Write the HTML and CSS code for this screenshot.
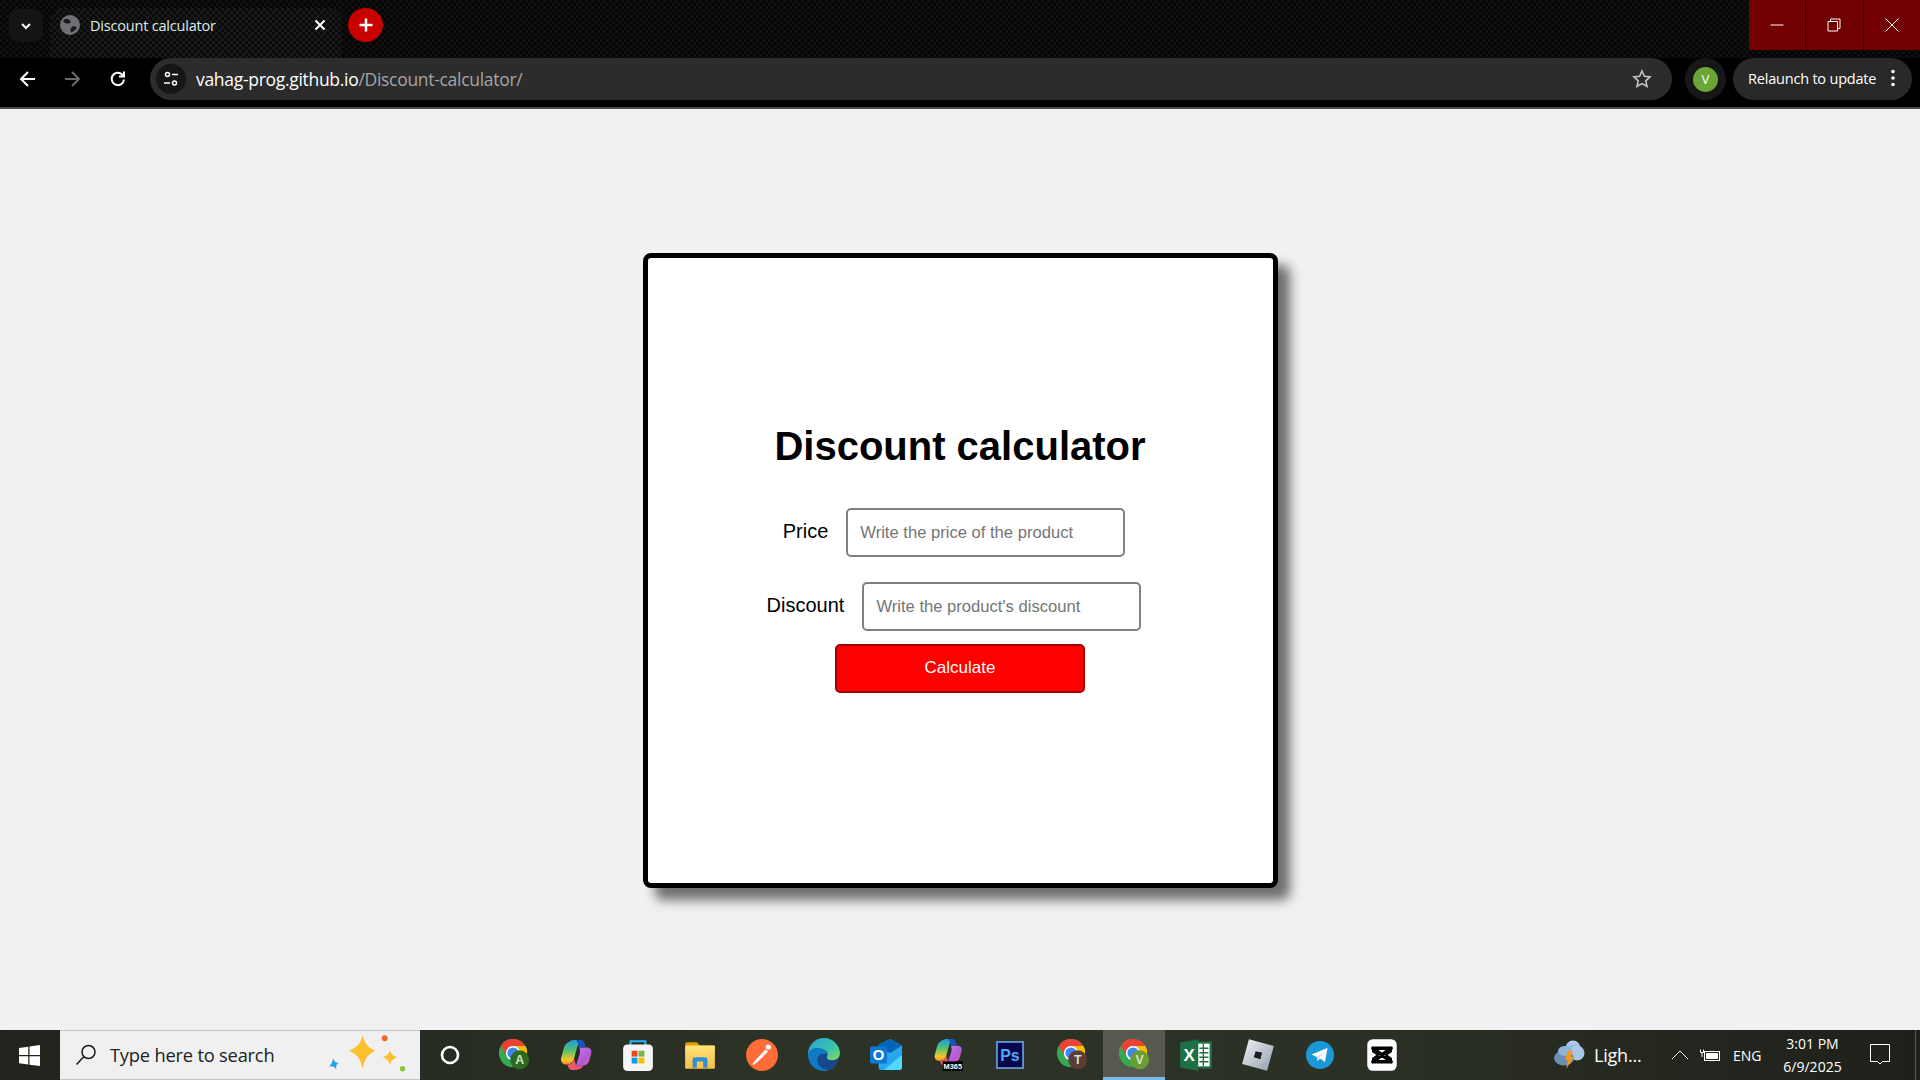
FILE: index.html
```html
<!DOCTYPE html>
<html lang="en">
<head>
<meta charset="utf-8">
<title>Discount calculator</title>
<link rel="stylesheet" href="styles.css">
</head>
<body>
<svg class="defs" width="0" height="0" aria-hidden="true">
  <defs>
    <symbol id="chrome" viewBox="0 0 30 30">
      <circle cx="15" cy="15" r="15" fill="#34a853"/>
      <path d="M2 7.5A15 15 0 0 1 28 7.5H15A7.5 7.5 0 0 0 8.5 18.75Z" fill="#ea4335"/>
      <path d="M28 7.5A15 15 0 0 1 15 30L21.5 18.75A7.5 7.5 0 0 0 15 7.5Z" fill="#fbbc04"/>
      <circle cx="15" cy="15" r="7.6" fill="#fff"/>
      <circle cx="15" cy="15" r="6" fill="#4285f4"/>
    </symbol>
    <linearGradient id="cpA" x1="0" y1="0" x2="0" y2="1">
      <stop offset="0" stop-color="#1e9be0"/><stop offset=".45" stop-color="#5cc46b"/><stop offset=".8" stop-color="#f5c52c"/><stop offset="1" stop-color="#f08a2c"/>
    </linearGradient>
    <linearGradient id="cpB" x1="0" y1="0" x2="1" y2="1">
      <stop offset="0" stop-color="#c77ae8"/><stop offset=".6" stop-color="#b05ad8"/><stop offset="1" stop-color="#f0608a"/>
    </linearGradient>
    <linearGradient id="cpC" x1="0" y1="0" x2="1" y2="1">
      <stop offset="0" stop-color="#ef6a5a"/><stop offset="1" stop-color="#ee4a7a"/>
    </linearGradient>
    <linearGradient id="edgeG" x1="0" y1="0" x2="1" y2="1">
      <stop offset="0" stop-color="#2aa5d8"/><stop offset=".55" stop-color="#36c0b0"/><stop offset="1" stop-color="#7ee05a"/>
    </linearGradient>
    <linearGradient id="robloxG" x1="0" y1="0" x2="1" y2="1">
      <stop offset="0" stop-color="#f4f4f4"/><stop offset="1" stop-color="#8f9cae"/>
    </linearGradient>
    <linearGradient id="cloudG" x1="0" y1="0" x2="0" y2="1">
      <stop offset="0" stop-color="#b9d2ee"/><stop offset="1" stop-color="#6f97c8"/>
    </linearGradient>
    <linearGradient id="folderG" x1="0" y1="0" x2="0" y2="1">
      <stop offset="0" stop-color="#ffe27a"/><stop offset="1" stop-color="#f5bf45"/>
    </linearGradient>
    <symbol id="copilot" viewBox="0 0 30 30">
      <path d="M8 3C9.5 1.500 12 1 15 1H20C18 3 17 5 16 8L13 19C12 22 9.500 24 6 24C2.500 24 0.500 21.500 1 18L3.500 9C4.300 6 5.500 4 8 3Z" fill="url(#cpA)"/>
      <path d="M18 8H25C28 8 30 10 29.300 13.500L27.500 20C26.700 23.500 24 25 21 25H15L18.500 14C19 12 19 9.500 18 8Z" fill="url(#cpB)"/>
      <path d="M15 1H20C22 1 23.500 4 24 8H18C17.500 5 16.500 2.500 15 1Z" fill="#1557c0"/>
      <path d="M7 24C10.500 24 12.500 22 13.500 19L15 25H22C20 28 17.500 29 14 29H11C9 29 7.500 27 7 24Z" fill="url(#cpC)"/>
    </symbol>
  </defs>
</svg>

<header class="chrome">
  <div class="tabstrip">
    <button class="tab-search" type="button" aria-label="Search tabs">
      <svg class="ic-12" viewBox="0 0 12 12"><path d="M2 4l4 4 4-4" class="st-white-2"/></svg>
    </button>
    <div class="tab">
      <svg class="favicon" viewBox="0 0 20 20">
        <circle cx="10" cy="10" r="10" fill="#6f7074"/>
        <path d="M3 5.500C6 3 9 4 10 5.500C11.500 7 9.500 9 7.500 8.500C5.500 8.500 3.500 7.500 3 5.500ZM17 13C15 15 13.500 16.500 11 17.500C10 15 10.500 12.500 12.500 11.500C14.500 11 16 11.500 17 13Z" fill="#1a1a1c"/>
      </svg>
      <span class="tab-title">Discount calculator</span>
      <svg class="tab-close" viewBox="0 0 12 12"><path d="M1.500 1.500l9 9m0-9l-9 9" class="st-white-2"/></svg>
    </div>
    <button class="new-tab" type="button" aria-label="New tab">
      <svg class="ic-16" viewBox="0 0 16 16"><path d="M8 1.500v13M1.500 8h13" class="st-white-25"/></svg>
    </button>
    <div class="win-controls">
      <div class="win-btn"><svg class="ic-14" viewBox="0 0 14 14"><path d="M0.500 7h13" class="st-thin"/></svg></div>
      <div class="win-btn"><svg class="ic-14" viewBox="0 0 14 14"><path d="M1 3.500h9.500v9.500H1zM3.500 3.500V1H13v9.500h-2.500" class="st-thin"/></svg></div>
      <div class="win-btn"><svg class="ic-14" viewBox="0 0 14 14"><path d="M0.500 0.500l13 13m0-13l-13 13" class="st-thin"/></svg></div>
    </div>
  </div>
  <div class="toolbar">
    <svg class="nav-icon nav-back" viewBox="0 0 20 20"><path d="M17 10H3.500M10 3l-7 7 7 7" class="st-white-2"/></svg>
    <svg class="nav-icon nav-fwd" viewBox="0 0 20 20"><path d="M3 10h13.500M10 3l7 7-7 7" class="st-grey-2"/></svg>
    <svg class="nav-icon nav-reload" viewBox="0 0 20 20"><path d="M16 10.500A6.200 6.200 0 1 1 14.200 5.500L16 7.500M16 2.500v5h-5" class="st-white-2"/></svg>
    <div class="omnibox">
      <span class="site-info">
        <svg class="ic-16" viewBox="0 0 16 16"><circle cx="4.500" cy="3.500" r="2" class="st-white-15"/><path d="M9 3.500h6M1 12h6" class="st-white-15"/><circle cx="11.500" cy="12" r="2" class="st-white-15"/></svg>
      </span>
      <span class="url"><span class="url-host">vahag-prog.github.io</span><span class="url-path">/Discount-calculator/</span></span>
      <svg class="star" viewBox="0 0 20 20"><path d="M10 2l2.400 5.300 5.600.6-4.200 3.900 1.200 5.700L10 14.600l-5 2.900 1.200-5.700L2 7.900l5.600-.6z" class="st-star"/></svg>
    </div>
    <div class="avatar-wrap"><span class="avatar">V</span></div>
    <div class="relaunch">
      <span class="relaunch-text">Relaunch to update</span>
      <svg class="dots" viewBox="0 0 4 18"><circle cx="2" cy="2.500" r="1.800" fill="#fff"/><circle cx="2" cy="9" r="1.800" fill="#fff"/><circle cx="2" cy="15.500" r="1.800" fill="#fff"/></svg>
    </div>
  </div>
</header>

<main class="page">
  <section class="card">
    <h1 class="card-title">Discount calculator</h1>
    <div class="field field-price">
      <label class="field-label" for="price">Price</label>
      <input class="field-input" id="price" type="text" placeholder="Write the price of the product">
    </div>
    <div class="field field-discount">
      <label class="field-label" for="discount">Discount</label>
      <input class="field-input" id="discount" type="text" placeholder="Write the product's discount">
    </div>
    <button class="calc-btn" type="button">Calculate</button>
  </section>
</main>

<footer class="taskbar">
  <div class="start">
    <svg class="win-logo" viewBox="0 0 20 20"><path d="M0 2.800L8.800 1.600V9.500H0zM10 1.400L20 0V9.500H10zM0 10.700H8.800V18.500L0 17.300zM10 10.700H20V20L10 18.700z" fill="#fff"/></svg>
  </div>
  <div class="search">
    <svg class="search-icon" viewBox="0 0 22 22"><circle cx="13.500" cy="8" r="6.500" class="st-dark"/><path d="M8.800 12.700L1.500 20.500" class="st-dark"/></svg>
    <span class="search-text">Type here to search</span>
    <svg class="sparkle" viewBox="0 0 80 40">
      <path d="M33 1C35 9 37 12 45 16C37 20 35 24 33 33C31 24 29 20 20 16C29 12 31 9 33 1Z" fill="#fbc02d"/>
      <path d="M59 15C60 19 62 21 66 22C62 24 60 25 59 30C58 25 56 24 52 22C56 21 58 19 59 15Z" fill="#fbc02d"/>
      <circle cx="54" cy="4" r="2.800" fill="#ef6a2a"/>
      <circle cx="71" cy="33" r="2.600" fill="#8fc640"/>
      <path d="M5 23C6 26 7 27 10 27.500C8 29 7.500 30 8 34C6 31 4.500 30.500 0.500 31C3 29.500 4 27 5 23Z" fill="#29a3e8"/>
    </svg>
  </div>
  <div class="apps">
    <div class="app"><svg class="ic-cortana" viewBox="0 0 20 20"><circle cx="10" cy="10" r="8" class="st-cortana"/></svg></div>
    <div class="app"><svg class="ic-app" viewBox="0 0 36 36"><use href="#chrome" x="2" y="1" width="30" height="30"/><circle cx="24" cy="23" r="10" fill="#2d6a1f"/><text x="24" y="28" class="badge-text">A</text></svg></div>
    <div class="app"><svg class="ic-copilot" viewBox="0 0 30 30"><use href="#copilot"/></svg></div>
    <div class="app">
      <svg class="ic-app" viewBox="0 0 32 32">
        <path d="M9 8V3h14v5" fill="none" stroke="#29b6f6" stroke-width="2"/>
        <rect x="2" y="6" width="28" height="25" rx="4" fill="#f5f5f5"/>
        <rect x="10" y="12" width="5.500" height="5.500" fill="#e8491d"/><rect x="16.500" y="12" width="5.500" height="5.500" fill="#7cb342"/>
        <rect x="10" y="18.500" width="5.500" height="5.500" fill="#0a9be3"/><rect x="16.500" y="18.500" width="5.500" height="5.500" fill="#fbb900"/>
      </svg>
    </div>
    <div class="app">
      <svg class="ic-app" viewBox="0 0 32 32">
        <path d="M2 6a2 2 0 0 1 2-2h9l3 3h14v6H2z" fill="#d9a106"/>
        <rect x="2" y="7" width="28" height="22" rx="1.500" fill="url(#folderG)"/>
        <path d="M9 28V20a2 2 0 0 1 2-2h10a2 2 0 0 1 2 2v8h-4v-6h-6v6z" fill="#2f8fd8"/>
      </svg>
    </div>
    <div class="app">
      <svg class="ic-app" viewBox="0 0 32 32">
        <circle cx="16" cy="16" r="15" fill="#ff6c37"/>
        <circle cx="22" cy="8.500" r="2.500" fill="#fff"/>
        <path d="M19.500 10.500L21.500 13L13 21.500L8 25.500L7 24.500L11 19.500Z" fill="#fff"/>
      </svg>
    </div>
    <div class="app">
      <svg class="ic-app" viewBox="0 0 32 32">
        <path d="M1 16A15 15 0 0 1 31 14C31 19 27 21 23 21C19 21 17.500 19 18.500 16C16 15.500 13 14 9 15C4 16.500 1 20 1 16Z" fill="url(#edgeG)"/>
        <path d="M1 16C1 11 6 9 11 9.500C16 10 19 12 20 15C15 13 10 16 10 21C10 26 15 30 21 30C19 30.700 17.500 31 16 31C7 31 1 24 1 16Z" fill="#0f79c8"/>
        <path d="M10 21C10 16 15 13 20 15C18 17 18 20 21 21C24 22 27 21 30 19C28 26 24 30 21 30C15 30 10 26 10 21Z" fill="#17488f"/>
      </svg>
    </div>
    <div class="app">
      <svg class="ic-app" viewBox="0 0 32 32">
        <path d="M9 6L20 1L31 7V28a2 2 0 0 1-2 2H11a2 2 0 0 1-2-2z" fill="#28a8ea"/>
        <path d="M9 6L20 1L31 7L20 14L9 8z" fill="#0364b8"/>
        <path d="M14 30L31 16V28a2 2 0 0 1-2 2z" fill="#50d9ff"/>
        <rect x="1" y="8" width="16" height="16" rx="1.500" fill="#0f78d4"/>
        <text x="9" y="21" class="outlook-text">O</text>
      </svg>
    </div>
    <div class="app">
      <svg class="ic-app ic-m365" viewBox="0 0 34 34">
        <use href="#copilot" x="2" y="1" width="30" height="27"/>
        <rect x="12" y="23" width="19" height="9" fill="#000"/>
        <text x="21.500" y="30.500" class="m365-text">M365</text>
      </svg>
    </div>
    <div class="app">
      <svg class="ic-ps" viewBox="0 0 30 30">
        <rect x="1" y="1" width="28" height="28" fill="#06064a" stroke="#5d95cf" stroke-width="2"/>
        <text x="15" y="21" class="ps-text">Ps</text>
      </svg>
    </div>
    <div class="app"><svg class="ic-app" viewBox="0 0 36 36"><use href="#chrome" x="2" y="1" width="30" height="30"/><circle cx="24" cy="23" r="10" fill="#5b3d36"/><text x="24" y="28" class="badge-text">T</text></svg></div>
    <div class="app app-active"><svg class="ic-app" viewBox="0 0 36 36"><use href="#chrome" x="2" y="1" width="30" height="30"/><circle cx="24" cy="23" r="10" fill="#6a9e32"/><text x="24" y="28" class="badge-text">V</text></svg></div>
    <div class="app">
      <svg class="ic-app" viewBox="0 0 30 30">
        <rect x="14" y="4" width="14" height="22" fill="#fff" stroke="#1d7044" stroke-width="2"/>
        <path d="M18 9h8M18 13h8M18 17h8M18 21h8M21.500 5v20" stroke="#1d7044" stroke-width="1.200"/>
        <path d="M1 4L17 1V29L1 26z" fill="#1d7044"/>
        <text x="9" y="20" class="excel-text">X</text>
      </svg>
    </div>
    <div class="app">
      <svg class="ic-app" viewBox="0 0 30 30">
        <path d="M7 1L29 7L23 29L1 23ZM13 12L11.500 17L17 18.500L18.500 13Z" fill="url(#robloxG)" fill-rule="evenodd"/>
        <path d="M13 12L18.500 13L17 18.500L11.500 17Z" fill="#1e1e1e"/>
      </svg>
    </div>
    <div class="app">
      <svg class="ic-telegram" viewBox="0 0 30 30">
        <circle cx="15" cy="15" r="14" fill="#1a98d8"/>
        <path d="M6.500 14.500L22.500 8L20 22L15 18.500L12.500 21L11.800 17Z" fill="#fff"/>
        <path d="M11.800 17L20 11.500L14 18L12.500 21Z" fill="#c8daea"/>
      </svg>
    </div>
    <div class="app">
      <svg class="ic-app" viewBox="0 0 30 30">
        <rect x="2" y="1" width="26" height="28" rx="5" fill="#fff"/>
        <path d="M7 9L23 9M7 21L23 21M7 9L23 21M23 9L7 21" fill="none" stroke="#000" stroke-width="3.200" stroke-linecap="round"/>
        <path d="M7 9L7 12L11.500 15L7 18L7 21M23 9L23 12L18.500 15L23 18L23 21" fill="none" stroke="#000" stroke-width="1.600"/>
      </svg>
    </div>
  </div>
  <div class="tray">
    <div class="weather">
      <svg class="ic-weather" viewBox="0 0 32 30">
        <circle cx="20" cy="8" r="7.500" fill="url(#cloudG)"/>
        <circle cx="24" cy="13" r="7.500" fill="#a9c8ea"/>
        <ellipse cx="11" cy="18" rx="10" ry="7.500" fill="#6f8fb0"/>
        <ellipse cx="12" cy="11" rx="7" ry="5" fill="#8fb3dc"/>
        <path d="M15 11H20L17.500 17H21L13 29L15.500 20H12Z" fill="#f59a1b"/>
      </svg>
      <span class="weather-text">Ligh...</span>
    </div>
    <svg class="ic-chevron" viewBox="0 0 18 10"><path d="M1 9l8-8 8 8" class="st-thin"/></svg>
    <svg class="ic-battery" viewBox="0 0 20 14">
      <rect x="4.500" y="3.500" width="15" height="9" class="st-thin"/><rect x="6" y="5" width="12" height="6" fill="#fff"/>
      <path d="M2 5v4M0.500 1.500v3h3v-3" class="st-thin"/>
    </svg>
    <span class="lang">ENG</span>
    <div class="clock"><span>3:01 PM</span><span>6/9/2025</span></div>
    <svg class="ic-notify" viewBox="0 0 20 22"><path d="M0.500 0.500h19v17h-7l-2.500 2.500-2.500-2.500h-7z" class="st-thin"/></svg>
    <span class="show-desktop"></span>
  </div>
</footer>
</body>
</html>
```

FILE: styles.css
```css
* { box-sizing: border-box; }

html, body {
  margin: 0;
  height: 100%;
}

body {
  display: flex;
  flex-direction: column;
  height: 1080px;
  overflow: hidden;
  background: #f1f1f1;
  font-family: "Liberation Sans", Arial, sans-serif;
}

.defs { display: block; height: 0; }

svg { display: block; flex: none; }

/* strokes */
.st-white-2 { fill: none; stroke: #fff; stroke-width: 2; }
.st-white-25 { fill: none; stroke: #fff; stroke-width: 2.5; }
.st-white-15 { fill: none; stroke: #fff; stroke-width: 1.5; }
.st-grey-2 { fill: none; stroke: #6b6b6b; stroke-width: 2; }
.st-thin { fill: none; stroke: #fff; stroke-width: 1; }
.st-star { fill: none; stroke: #c4c4c4; stroke-width: 1.6; }
.st-dark { fill: none; stroke: #1a1a1a; stroke-width: 1.5; }
.st-cortana { fill: none; stroke: #fff; stroke-width: 2.600; }

.ic-12 { width: 12px; height: 12px; }
.ic-14 { width: 14px; height: 14px; }
.ic-16 { width: 16px; height: 16px; }

/* browser chrome */
.chrome {
  flex: none;
  height: 109px;
  background: #000;
  border-bottom: 2px solid #4d4d4d;
  font-family: "Open Sans", "Noto Sans", sans-serif;
}

.tabstrip {
  height: 58px;
  display: flex;
  align-items: flex-start;
  padding-left: 9px;
  background-color: #070707;
  background-image: repeating-conic-gradient(#101010 0 25%, #050505 0 50%);
  background-size: 6px 6px;
}

.tab-search {
  width: 34px;
  height: 33px;
  margin-top: 9px;
  padding: 0;
  border: 0;
  border-radius: 10px;
  background: #141414;
  display: flex;
  align-items: center;
  justify-content: center;
}

.tab {
  width: 292px;
  height: 50px;
  margin-top: 8px;
  margin-left: 7px;
  padding: 0 16px 16px 10px;
  border-radius: 12px 12px 0 0;
  background-color: #0b0b0b;
  background-image: repeating-conic-gradient(#191919 0 25%, #0a0a0a 0 50%);
  background-size: 6px 6px;
  display: flex;
  align-items: center;
}

.favicon { width: 20px; height: 20px; }

.tab-title {
  margin-left: 10px;
  flex: 1;
  font-size: 14.500px;
  letter-spacing: -0.200px;
  color: #dcecec;
  white-space: nowrap;
}

.tab-close { width: 12px; height: 12px; }

.new-tab {
  width: 35px;
  height: 34px;
  margin-top: 8px;
  margin-left: 6px;
  padding: 0;
  border: 0;
  border-radius: 50%;
  background: #c80000;
  display: flex;
  align-items: center;
  justify-content: center;
}

.win-controls {
  margin-left: auto;
  display: flex;
  gap: 1px;
}

.win-btn {
  width: 56.500px;
  height: 50px;
  background: #730000;
  display: flex;
  align-items: center;
  justify-content: center;
}

.toolbar {
  height: 49px;
  display: flex;
  align-items: flex-start;
  padding: 0 8px 0 17px;
  background: #000;
}

.nav-icon {
  width: 20px;
  height: 20px;
  margin-top: 11px;
}

.nav-back { margin-left: 1px; }
.nav-fwd { margin-left: 24px; }
.nav-reload { margin-left: 26px; margin-right: 22px; }

.omnibox {
  width: 1522px;
  height: 42px;
  margin-top: 0;
  padding: 0 20px 0 6px;
  border-radius: 21px;
  background: #2c2c2c;
  display: flex;
  align-items: center;
}

.site-info {
  width: 30px;
  height: 30px;
  border-radius: 50%;
  background: #161616;
  display: flex;
  align-items: center;
  justify-content: center;
}

.url {
  margin-left: 10px;
  flex: 1;
  font-size: 17.500px;
  letter-spacing: -0.300px;
  white-space: nowrap;
}

.url-host { color: #fff; }
.url-path { color: #a5a5a5; }

.star { width: 20px; height: 20px; }

.avatar-wrap {
  width: 41px;
  height: 42px;
  margin-left: 13px;
  border-radius: 50%;
  background: #171717;
  display: flex;
  align-items: center;
  justify-content: center;
}

.avatar {
  width: 25px;
  height: 25px;
  border-radius: 50%;
  background: #6aa636;
  color: #fff;
  font-size: 13px;
  line-height: 25px;
  text-align: center;
}

.relaunch {
  width: 179px;
  height: 42px;
  margin-left: 7px;
  padding: 0 17px 2px 15px;
  border-radius: 21px;
  background: #292929;
  display: flex;
  align-items: center;
  justify-content: space-between;
}

.relaunch-text {
  font-size: 14.500px;
  letter-spacing: -0.200px;
  color: #fff;
  white-space: nowrap;
}

.dots { width: 4px; height: 18px; }

/* page */
.page {
  flex: 1;
  min-height: 0;
  padding-top: 2px;
  display: flex;
  align-items: center;
  justify-content: center;
  background: #f1f1f1;
}

.card {
  width: 635px;
  height: 635px;
  padding-bottom: 24px;
  border: 5px solid #000;
  border-radius: 8px;
  background: #fff;
  box-shadow: 12px 12px 12px rgba(0, 0, 0, 0.55);
  display: flex;
  flex-direction: column;
  align-items: center;
  justify-content: center;
}

.card-title {
  margin: -1px 0 39px;
  font-size: 40px;
  line-height: 46px;
  font-weight: 700;
  color: #000;
}

.field {
  display: flex;
  align-items: center;
  gap: 18px;
  padding-right: 12px;
}

.field-price { margin-bottom: 25px; }
.field-discount { margin-bottom: 13px; }

.field-label {
  font-size: 20px;
  line-height: 23px;
  margin-top: -2px;
  color: #000;
}

.field-input {
  width: 279px;
  height: 49px;
  padding: 0 12px;
  border: 2px solid #808080;
  border-radius: 5px;
  background: #fff;
  font-family: "Liberation Sans", Arial, sans-serif;
  font-size: 16.600px;
  outline: none;
}

.field-input::placeholder { color: #757575; opacity: 1; }

.calc-btn {
  width: 250px;
  height: 49px;
  padding: 0 0 2px;
  border: 2px solid #a00000;
  border-radius: 5px;
  background: #ff0000;
  color: #fff;
  font-family: "Liberation Sans", Arial, sans-serif;
  font-size: 17px;
}

/* taskbar */
.taskbar {
  flex: none;
  height: 50px;
  display: flex;
  align-items: stretch;
  background: linear-gradient(90deg, #20241c 0%, #2d3226 40%, #2c3125 70%, #1e201a 100%);
  font-family: "Open Sans", "Noto Sans", sans-serif;
}

.start {
  width: 60px;
  padding-right: 1px;
  display: flex;
  align-items: center;
  justify-content: center;
}

.win-logo { width: 21px; height: 21px; }

.search {
  width: 360px;
  padding-left: 15px;
  border-top: 1px solid #c4c4c4;
  border-bottom: 1px solid #c4c4c4;
  background: #f0f0f0;
  display: flex;
  align-items: center;
}

.search-icon { width: 22px; height: 22px; }

.search-text {
  margin-left: 13px;
  padding-bottom: 2px;
  font-size: 18.300px;
  letter-spacing: -0.200px;
  color: #222;
  white-space: nowrap;
}

.sparkle {
  width: 84px;
  height: 42px;
  margin-left: auto;
  margin-right: 8px;
}

.apps {
  display: flex;
  padding-left: 1px;
}

.app {
  width: 62px;
  display: flex;
  align-items: center;
  justify-content: center;
}

.app-active {
  background: #57594f;
  border-bottom: 3px solid #76b9ed;
  padding-top: 3px;
}

.ic-app { width: 34px; height: 34px; }
.ic-m365 { width: 36px; height: 36px; }
.ic-copilot { width: 32px; height: 32px; }
.ic-ps { width: 28px; height: 28px; }
.ic-telegram { width: 30px; height: 30px; }
.ic-cortana { width: 20px; height: 20px; margin-right: 4px; }

.badge-text {
  font-family: "Liberation Sans", sans-serif;
  font-size: 13px;
  font-weight: 700;
  fill: #d8e2cc;
  text-anchor: middle;
}

.outlook-text {
  font-family: "Liberation Sans", sans-serif;
  font-size: 14px;
  font-weight: 700;
  fill: #fff;
  text-anchor: middle;
}

.m365-text {
  font-family: "Liberation Sans", sans-serif;
  font-size: 7px;
  font-weight: 700;
  fill: #fff;
  text-anchor: middle;
}

.ps-text {
  font-family: "Liberation Sans", sans-serif;
  font-size: 17px;
  font-weight: 700;
  fill: #4fa8f0;
  text-anchor: middle;
}

.excel-text {
  font-family: "Liberation Sans", sans-serif;
  font-size: 15px;
  font-weight: 700;
  fill: #fff;
  text-anchor: middle;
}

.tray {
  flex: 1;
  display: flex;
  align-items: center;
  color: #fff;
  padding-left: 140px;
}

.weather {
  display: flex;
  align-items: center;
  width: 118px;
}

.ic-weather { width: 32px; height: 30px; }

.weather-text {
  margin-left: 9px;
  font-size: 18px;
  letter-spacing: -0.200px;
}

.ic-chevron { width: 18px; height: 10px; }

.ic-battery {
  width: 20px;
  height: 14px;
  margin-left: 11px;
}

.lang {
  margin-left: 13px;
  font-size: 14px;
}

.clock {
  width: 60px;
  margin-left: 21px;
  display: flex;
  flex-direction: column;
  align-items: center;
  gap: 4px;
  font-size: 14px;
  line-height: 19px;
  white-space: nowrap;
}

.ic-notify {
  width: 20px;
  height: 22px;
  margin-left: 27px;
}

.show-desktop {
  width: 1px;
  height: 50px;
  margin-left: auto;
  margin-right: 4px;
  background: #55584e;
}
```
